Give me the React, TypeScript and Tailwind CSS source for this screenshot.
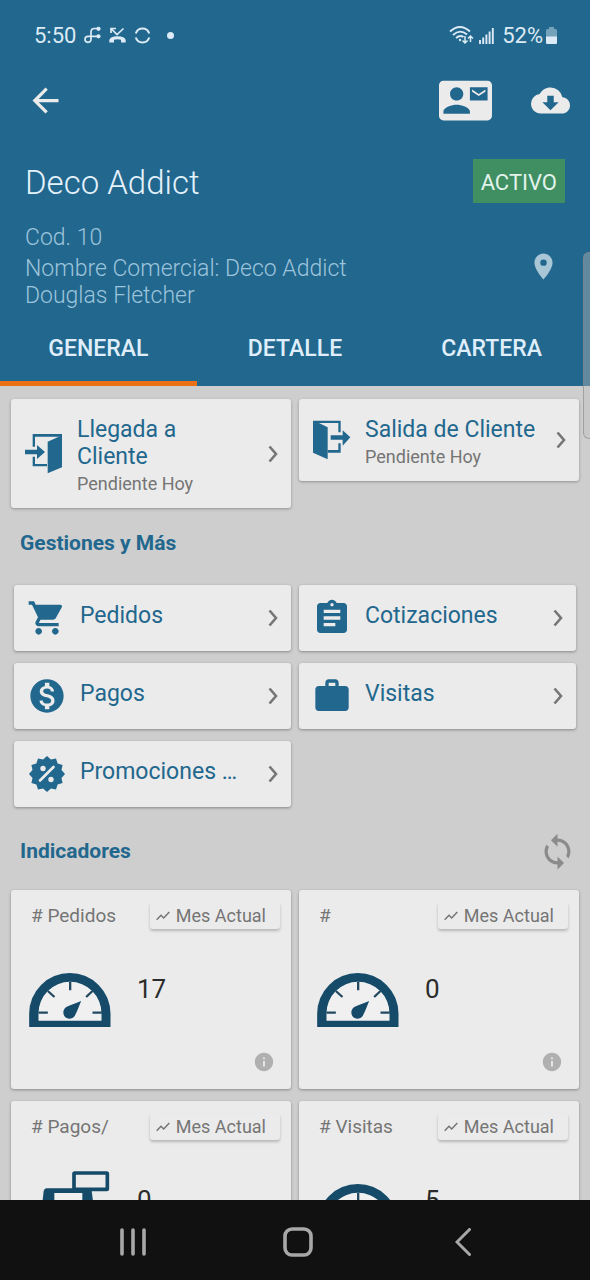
import type { ReactNode } from "react";
import { useState } from "react";
import {
  MdArrowBack,
  MdAssignment,
  MdCloudDownload,
  MdContactMail,
  MdInfo,
  MdLocationOn,
  MdMonetizationOn,
  MdShoppingCart,
  MdSync,
  MdWork,
} from "react-icons/md";

const TABS = ["GENERAL", "DETALLE", "CARTERA"];

const ACTIONS = [
  { label: "Pedidos", icon: <MdShoppingCart size={40} /> },
  { label: "Cotizaciones", icon: <MdAssignment size={40} /> },
  { label: "Pagos", icon: <MdMonetizationOn size={40} /> },
  { label: "Visitas", icon: <MdWork size={40} /> },
  { label: "Promociones …", icon: <PromoIcon /> },
];

const INDICATORS = [
  { label: "# Pedidos", value: 17, icon: <GaugeIcon /> },
  { label: "#", value: 0, icon: <GaugeIcon /> },
  { label: "# Pagos/", value: 0, icon: <RegisterIcon /> },
  { label: "# Visitas", value: 5, icon: <GaugeIcon /> },
];

function PromoIcon() {
  const points = Array.from({ length: 24 }, (_, i) => {
    const r = i % 2 === 0 ? 18 : 15;
    const a = (i * Math.PI) / 12 - Math.PI / 2;
    return `${20 + r * Math.cos(a)},${20 + r * Math.sin(a)}`;
  }).join(" ");
  return (
    <svg width="40" height="40" viewBox="0 0 40 40">
      <polygon points={points} fill="currentColor" />
      <path d="M13 26.5 26.5 13" stroke="#ebebeb" strokeWidth="2.6" strokeLinecap="round" />
      <circle cx="16" cy="14.5" r="2.7" fill="#ebebeb" />
      <circle cx="24" cy="25.5" r="2.7" fill="#ebebeb" />
    </svg>
  );
}

function EnterIcon() {
  return (
    <svg width="38" height="40" viewBox="0 0 114 120" fill="currentColor">
      <path d="M23 0H111V8H30V38H23ZM23 68H30V90H66V97H23Z" />
      <path d="M68 23 111 4V100L68 118Z" />
      <path d="M0 47H36V33L60 54 36 75V61H0Z" />
    </svg>
  );
}

function ExitIcon() {
  return (
    <svg width="38" height="40" viewBox="0 0 114 120" fill="currentColor">
      <path d="M0 2H83V37H76V9H18L44 22V118L0 98Z" />
      <path d="M76 70H83V98H44V90H76Z" />
      <path d="M53 46H89V31L112 52 89 77V59H53Z" />
    </svg>
  );
}

function GaugeIcon() {
  return (
    <svg width="82" height="54" viewBox="0 0 245 162">
      <path d="M0 162V122A122 122 0 0 1 244 122V162Z" fill="#154a69" />
      <path d="M28 143V121A94 94 0 0 1 217 121V143Z" fill="#f0f0f0" />
      <path
        d="M28 119H56M190 119H218M123 27V52M56 54 76 72M190 54 171 72"
        stroke="#234a61"
        strokeWidth="7"
      />
      <path d="M156 84C148 104 143 117 137 128C130 140 112 140 105 128C99 116 104 105 116 100C129 94 140 91 156 84Z" fill="#154a69" />
    </svg>
  );
}

function RegisterIcon() {
  return (
    <svg width="82" height="80" viewBox="0 0 246 240" fill="none" stroke="#154a69">
      <rect x="135" y="6" width="100" height="49" rx="2" strokeWidth="11" />
      <path d="M52 52H180Q186 52 188 60L200 150H34L44 60Q46 52 52 52Z" fill="#154a69" stroke="none" />
      <rect x="76" y="66" width="84" height="50" fill="#f0f0f0" stroke="none" />
      <rect x="12" y="155" width="208" height="75" rx="6" strokeWidth="14" />
      <path d="M90 192H142" strokeWidth="10" />
    </svg>
  );
}

function Chevron() {
  return (
    <svg className="shrink-0 text-[#757575]" width="10" height="18" viewBox="0 0 10 18" fill="none">
      <path d="M1.5 1.5 8 9 1.5 16.5" stroke="currentColor" strokeWidth="2.6" />
    </svg>
  );
}

function StatusBar() {
  return (
    <div className="flex h-[70px] items-center justify-between pr-[33px] pl-[34px] text-[22px] text-[#dcebf5]">
      <div className="flex items-center gap-2">
        <span>5:50</span>
        <svg width="17" height="18" viewBox="0 0 17 18" fill="none" stroke="currentColor" strokeWidth="1.7">
          <path d="M7 9.5V13.500A3 3 0 1 1 4 10.300H14M7 10V6Q7 2.500 10.500 2.500H14" />
          <circle cx="14.500" cy="2.800" r="1.300" fill="currentColor" />
          <circle cx="14.500" cy="10.300" r="1.300" fill="currentColor" />
        </svg>
        <svg width="17" height="17" viewBox="0 0 17 17" fill="none" stroke="currentColor">
          <path d="M2 6V1.500H7M2.500 2 8 7.500 14.500 1.500" strokeWidth="1.700" />
          <path d="M.3 15.500V13Q1 9.500 8.500 9.300Q16 9.500 16.700 13V15.500H12V12.800Q8.500 11.700 5 12.800V15.500Z" fill="currentColor" stroke="none" />
        </svg>
        <svg width="17" height="17" viewBox="0 0 17 17" fill="none" stroke="currentColor" strokeWidth="2">
          <path d="M1.800 6.500A7 7 0 0 1 15.200 6.500M1.800 10.500A7 7 0 0 0 15.200 10.500" />
        </svg>
        <span className="ml-2 size-[7px] rounded-full bg-current" />
      </div>
      <div className="flex items-center gap-1">
        <svg width="25" height="20" viewBox="0 0 25 20" fill="none" stroke="currentColor" strokeWidth="1.800">
          <path d="M1 6.500Q11 -2.500 21 6.500M4 10Q11 3.500 18 9.500M7 13Q11 9.500 14.500 12" />
          <circle cx="11" cy="15" r="1.200" fill="currentColor" stroke="none" />
          <path d="M16 11V18M13.500 15.500 16 18 18.500 15.500M21.500 17V11M19 13.500 21.500 11 24 13.500" strokeWidth="1.500" />
        </svg>
        <svg width="17" height="17" viewBox="0 0 17 17" stroke="currentColor" strokeWidth="1.900">
          <path d="M2 17V13M5.200 17V10.500M8.400 17V7.500M11.600 17V4.500M14.800 17V1" />
        </svg>
        <span className="ml-[3px]">52%</span>
        <svg className="-ml-px" width="11" height="17" viewBox="0 0 11 17" fill="currentColor">
          <path d="M3 0H8V2H9.500Q11 2 11 3.500V15.500Q11 17 9.500 17H1.500Q0 17 0 15.500V3.500Q0 2 1.500 2H3Z" opacity=".45" />
          <path d="M0 9.500H11V15.500Q11 17 9.500 17H1.500Q0 17 0 15.500Z" />
        </svg>
      </div>
    </div>
  );
}

function VisitCard({ icon, title }: { icon: ReactNode; title: string }) {
  return (
    <button
      type="button"
      className="flex items-center rounded-[3px] bg-[#ebebeb] py-2 pr-[13px] pl-[14px] text-left shadow-[0_1px_3px_rgba(0,0,0,0.3)]"
    >
      <span className="shrink-0 text-[#22678d]">{icon}</span>
      <span className="mr-4 ml-[14px] flex-1 pt-[9px] pb-[3px]">
        <span className="block text-[23px] leading-[27px] text-[#22678d]">{title}</span>
        <span className="block text-[18px] leading-[27px] text-[#757575]">Pendiente Hoy</span>
      </span>
      <Chevron />
    </button>
  );
}

export default function App() {
  const [tab, setTab] = useState(TABS[0]);

  return (
    <div className="relative flex h-screen flex-col overflow-hidden bg-[#cecece] font-[Roboto,sans-serif]">
      <header className="shrink-0 bg-[#22678d]">
        <StatusBar />
        <div className="flex h-[60px] items-center pr-5 pl-[26px] text-[#ebebeb]">
          <button type="button" aria-label="Volver">
            <MdArrowBack size={39} />
          </button>
          <button type="button" aria-label="Contacto" className="ml-auto">
            <MdContactMail size={53} />
          </button>
          <button type="button" aria-label="Descargar" className="ml-[39px]">
            <MdCloudDownload size={39} />
          </button>
        </div>

        <div className="px-[25px] pt-[29px]">
          <div className="flex items-start justify-between">
            <h1 className="text-[33px] leading-[48px] font-light text-[#e4f2fc]">Deco Addict</h1>
            <span className="bg-[#3f8f62] px-2 pt-[3px] text-[22px] leading-[41px] text-[#e2f3ea]">ACTIVO</span>
          </div>
          <div className="flex items-center justify-between pt-[17px] text-[23px] leading-[27px] font-light text-[#9cc4dc]">
            <div>
              <p className="mb-1">Cod. 10</p>
              <p>Nombre Comercial: Deco Addict</p>
              <p>Douglas Fletcher</p>
            </div>
            <button type="button" aria-label="Ubicación" className="mr-[6px] text-[#a9c6d6]">
              <MdLocationOn size={31} />
            </button>
          </div>
        </div>

        <div role="tablist" className="grid grid-cols-3">
          {TABS.map((t) => (
            <button
              key={t}
              type="button"
              role="tab"
              aria-selected={tab === t}
              onClick={() => setTab(t)}
              className={
                "h-[77px] border-b-[5px] pt-2 text-[23px] font-medium text-[#dfeefa] " +
                (tab === t ? "border-[#ec7016]" : "border-transparent")
              }
            >
              {t}
            </button>
          ))}
        </div>
      </header>

      <main className="flex-1 overflow-y-auto px-[11px] pt-[13px] [scrollbar-width:none]">
        <section className="grid grid-cols-2 items-start gap-2">
          <VisitCard icon={<EnterIcon />} title="Llegada a Cliente" />
          <VisitCard icon={<ExitIcon />} title="Salida de Cliente" />
        </section>

        <h2 className="mt-[21px] ml-[9px] text-[21px] leading-7 font-bold text-[#22678d]">Gestiones y Más</h2>
        <section className="mx-[3px] mt-7 grid grid-cols-2 gap-x-2 gap-y-3">
          {ACTIONS.map((a) => (
            <button
              key={a.label}
              type="button"
              className="flex h-[66px] items-center rounded-[3px] bg-[#ebebeb] pr-[13px] pl-[13px] text-left text-[#22678d] shadow-[0_1px_3px_rgba(0,0,0,0.35)]"
            >
              <span className="shrink-0">{a.icon}</span>
              <span className="mr-4 ml-[13px] flex-1 truncate pb-[3px] text-[23px]">{a.label}</span>
              <Chevron />
            </button>
          ))}
        </section>

        <div className="mt-6 flex h-10 items-center justify-between pr-[2px] pl-[9px]">
          <h2 className="text-[21px] leading-7 font-bold text-[#22678d]">Indicadores</h2>
          <button type="button" aria-label="Actualizar" className="text-[#8b8b8b]">
            <MdSync size={39} />
          </button>
        </div>

        <section className="mt-[19px] grid grid-cols-2 gap-x-2 gap-y-3">
          {INDICATORS.map((item) => (
            <article
              key={item.label}
              className="rounded-[3px] bg-[#ebebeb] pt-3 pb-4 shadow-[0_1px_3px_rgba(0,0,0,0.35)]"
            >
              <div className="flex items-center justify-between pr-[11px] pl-5 text-[#757575]">
                <h3 className="text-[19px] leading-[27px]">{item.label}</h3>
                <button
                  type="button"
                  className="flex items-center gap-[6px] rounded-[3px] pr-[14px] pl-[6px] text-[18px] leading-[27px] shadow-[0_2px_3px_rgba(0,0,0,0.22)]"
                >
                  <svg width="14" height="10" viewBox="0 0 14 10" fill="none">
                    <path d="M.7 8.700 5 4.300 7.700 7 13.300 1" stroke="currentColor" strokeWidth="1.500" />
                  </svg>
                  Mes Actual
                </button>
              </div>
              <div className="mt-[31px] flex h-20 pl-[18px]">
                <div className="flex items-center">{item.icon}</div>
                <p className="mt-[15px] ml-[26px] text-[26px] leading-7 text-[#2b2b2b]">{item.value}</p>
              </div>
              <div className="mt-[11px] flex justify-end pr-4">
                <button type="button" aria-label="Información" className="text-[#b0b0b0]">
                  <MdInfo size={22} />
                </button>
              </div>
            </article>
          ))}
        </section>
      </main>

      <nav className="grid h-20 shrink-0 grid-cols-3 items-center bg-[#111111] pt-1 pr-[45px] pl-[51px] text-[#a8a8a8]">
        <button type="button" aria-label="Recientes" className="flex justify-center">
          <svg width="26" height="28" viewBox="0 0 26 28" stroke="currentColor" strokeWidth="3.600" strokeLinecap="round">
            <path d="M2 2V26M13 2V26M24 2V26" />
          </svg>
        </button>
        <button type="button" aria-label="Inicio" className="flex justify-center">
          <svg width="30" height="30" viewBox="0 0 30 30" fill="none" stroke="currentColor" strokeWidth="3.600">
            <rect x="2" y="2" width="26" height="26" rx="7" />
          </svg>
        </button>
        <button type="button" aria-label="Atrás" className="flex justify-center">
          <svg width="16" height="28" viewBox="0 0 16 28" fill="none" stroke="currentColor" strokeWidth="3">
            <path d="M14.500 1.500 2 14 14.500 26.500" strokeLinecap="round" />
          </svg>
        </button>
      </nav>

      {/* edge panel handle */}
      <div className="absolute top-[252px] right-0 h-[187px] w-[7px] rounded-l-[6px] border border-r-0 border-[#888888]/60 bg-[#c0c0c0]/40" />
    </div>
  );
}
